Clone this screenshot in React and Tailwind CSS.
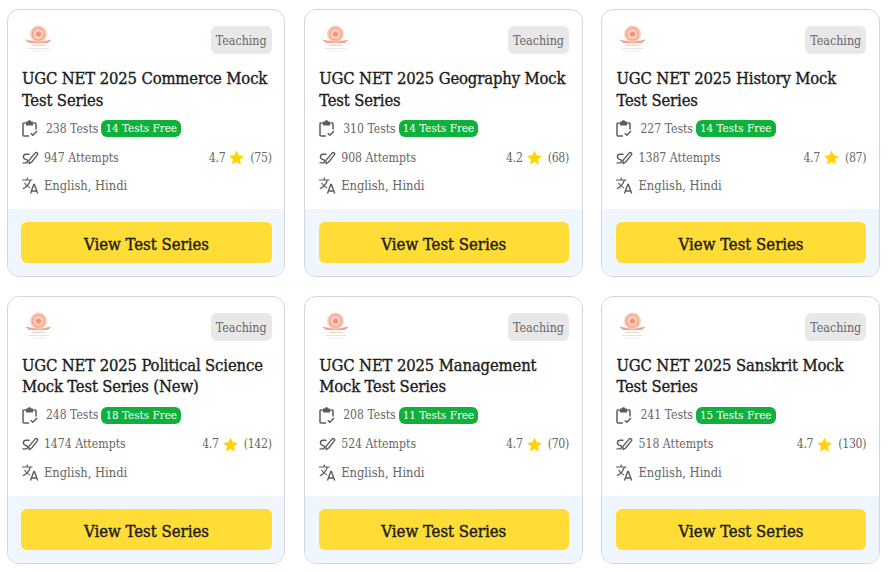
import React from 'react';

const cards = [
  { title: 'UGC NET 2025 Commerce Mock Test Series', tests: 238, free: 14, attempts: 947, rating: '4.7', reviews: 75 },
  { title: 'UGC NET 2025 Geography Mock Test Series', tests: 310, free: 14, attempts: 908, rating: '4.2', reviews: 68 },
  { title: 'UGC NET 2025 History Mock Test Series', tests: 227, free: 14, attempts: 1387, rating: '4.7', reviews: 87 },
  { title: 'UGC NET 2025 Political Science Mock Test Series (New)', tests: 248, free: 18, attempts: 1474, rating: '4.7', reviews: 142 },
  { title: 'UGC NET 2025 Management Mock Test Series', tests: 208, free: 11, attempts: 524, rating: '4.7', reviews: 70 },
  { title: 'UGC NET 2025 Sanskrit Mock Test Series', tests: 241, free: 15, attempts: 518, rating: '4.7', reviews: 130 },
];

// pale seal, only a blur of orange at this size
const Logo = () => (
  <svg width="32" height="32" viewBox="0 0 32 32" aria-hidden="true">
    <circle cx="16.5" cy="10" r="8.5" fill="#fbd0c0" />
    <circle cx="16.5" cy="10" r="6" fill="none" stroke="#f4a68d" strokeWidth="1.6" />
    <circle cx="16.5" cy="10" r="2.6" fill="#f3947a" />
    <path d="M3 15.5 16.5 18 30 15.5l-4 3.5h-19z" fill="#f3a68e" />
    <rect x="10" y="20.5" width="13" height="1.4" fill="#f9d3c6" />
    <rect x="6" y="24" width="21" height="1" fill="#ebe3e0" />
    <rect x="9" y="26.5" width="15" height="1" fill="#f0eded" />
  </svg>
);

const ClipboardCheck = () => (
  <svg width="16" height="17" viewBox="0 0 16 17" fill="none" stroke="#5c5c5c" strokeWidth="1.5" strokeLinejoin="round" className="shrink-0" aria-hidden="true">
    <path d="M3.5 3H2a1 1 0 0 0-1 1v11a1 1 0 0 0 1 1h5" />
    <path d="M11.5 3H13a1 1 0 0 1 1 1v5.5" />
    <path d="M4.5 2.2h1.6L7 .9h1l.9 1.3h1.6v2.6h-6z" fill="#5c5c5c" />
    <path d="m8.8 13.2 2 2.1 4.2-4.3" />
  </svg>
);

const Pencil = () => (
  <svg width="17" height="14" viewBox="0 0 17 14" fill="none" stroke="#5c5c5c" strokeWidth="1.4" strokeLinejoin="round" strokeLinecap="round" className="shrink-0" aria-hidden="true">
    <path d="m7.2 12.6-.3-3.2 6.2-7.3a1.4 1.4 0 0 1 2.2 1.8L9.7 11z" />
    <path d="M7 3.2H4a2.6 2.6 0 0 0-.7 5.1l.7.2a1.7 1.7 0 0 1-.3 3.4H1" />
  </svg>
);

const Translate = () => (
  <svg width="17" height="17" viewBox="0 0 17 17" fill="none" stroke="#5c5c5c" strokeWidth="1.2" className="shrink-0" aria-hidden="true">
    <path d="M0 3h10.5M5.2 .5V3M8.4 3C7.4 6.6 4.2 10.2.8 11.8M2.5 6c1.5 2.6 3.6 4.2 5.7 5" />
    <path d="m8.5 16.5 3.3-9h.6l3.3 9M9.8 14h4.6" strokeWidth="1.4" />
  </svg>
);

const Star = () => (
  <svg width="15" height="15" viewBox="0 0 24 24" fill="#ffd400" aria-hidden="true">
    <path d="m12 .8 3.5 7.6 8.3 1-6.2 5.6 1.7 8.2L12 19.1l-7.3 4.1 1.7-8.2L.2 9.4l8.3-1z" />
  </svg>
);

const Card = ({ card }) => (
  <div className="h-[268px] flex flex-col rounded-[12px] border border-[#d3d7dc] bg-white overflow-hidden">
    <div className="flex-1 pl-[14.2px] pr-[12.6px] pt-[14px]">
      <div className="flex items-start justify-between h-[32px]">
        <Logo />
        <span className="mt-[2px] h-[28px] leading-[29px] px-[5px] rounded-[6px] bg-[#e8e8e8] text-[12.4px] text-[#666]">Teaching</span>
      </div>
      <h3 className="mt-[12px] text-[16.5px] leading-[21.5px] tracking-[-0.14px] text-[#1c1c1c] [-webkit-text-stroke:0.35px_#1c1c1c]">{card.title}</h3>
      <div className="mt-[8.4px] flex items-center h-[18px] text-[12.1px] text-[#666]">
        <ClipboardCheck />
        <span className="ml-[8px]">{card.tests} Tests</span>
        <span className="ml-[3px] h-[17px] leading-[17px] px-[4px] rounded-[6px] bg-[#0fb03c] text-[11.6px] text-white">{card.free} Tests Free</span>
      </div>
      <div className="mt-[11px] flex items-center justify-between h-[18px] text-[12.2px] text-[#666]">
        <div className="flex items-center">
          <Pencil />
          <span className="ml-[5px]">{card.attempts} Attempts</span>
        </div>
        <div className="flex items-center tracking-[-0.3px]">
          <span>{card.rating}</span>
          <span className="ml-[4px] mr-[6px]"><Star /></span>
          <span>({card.reviews})</span>
        </div>
      </div>
      <div className="mt-[10px] flex items-center h-[18px] text-[12.8px] text-[#666]">
        <Translate />
        <span className="ml-[5px]">English, Hindi</span>
      </div>
    </div>
    <div className="h-[67.4px] shrink-0 bg-[#f0f6fd] pl-[13.6px] pr-[12.6px] pt-[13px]">
      <button className="w-full h-[41px] pt-[6px] rounded-[6px] bg-[#ffdc36] text-[16.6px] text-[#1c1c1c] [-webkit-text-stroke:0.4px_#1c1c1c]">View Test Series</button>
    </div>
  </div>
);

export default function App() {
  return (
    <div className="w-[888px] h-[572px] overflow-hidden bg-white pl-[6.7px] pt-[9.4px] font-['DejaVu_Serif_Condensed','Liberation_Serif',serif]">
      <div className="grid grid-cols-[278.6px_278.6px_278.6px] gap-x-[18.7px] gap-y-[18.6px]">
        {cards.map((card) => (
          <Card key={card.title} card={card} />
        ))}
      </div>
    </div>
  );
}
